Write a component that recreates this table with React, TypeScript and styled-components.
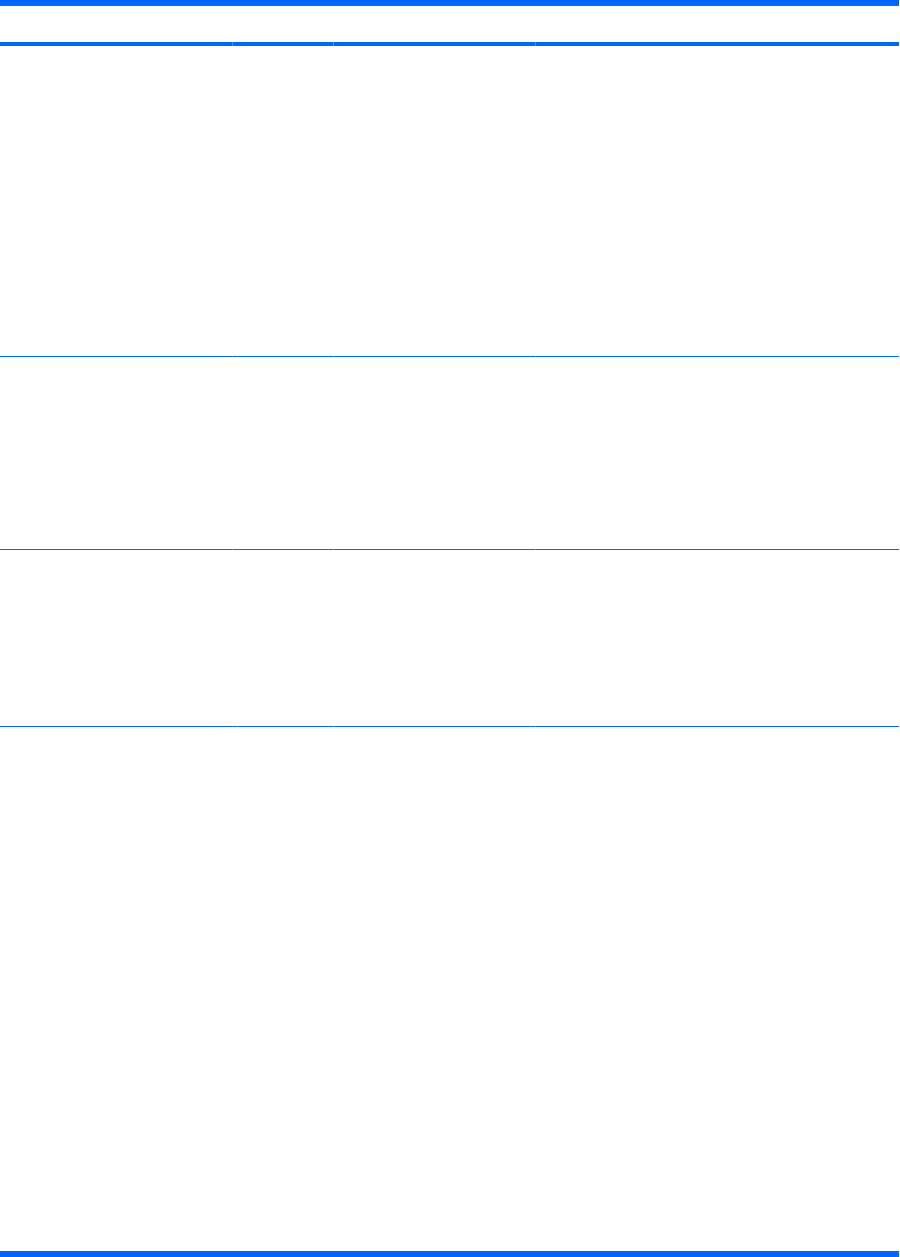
import React from "react";
import styled, { createGlobalStyle } from "styled-components";

const Global = createGlobalStyle`
  html, body { margin: 0; padding: 0; background: #ffffff; }
  body { font-family: "Liberation Sans", Arial, sans-serif; }
`;

const BLUE = "#0066ff";

const Table = styled.div`
  width: 899px;
  height: 1257px;
  display: grid;
  grid-template-columns: 232px 101px 202px 364px;
  grid-template-rows: 6px 36px 4px 310px 1px 192px 1px 176px 1px 524px 6px;
`;

const Bar = styled.div`
  grid-column: 1 / -1;
  background: ${BLUE};
`;

const Cell = styled.div`
  background: #ffffff;
`;

const Rule = styled.div<{ $first?: boolean }>`
  background: ${BLUE};
  box-shadow: ${(p) => (p.$first ? "none" : "inset 1px 0 0 #4d94ff")};
`;

const cols = [0, 1, 2, 3];

function RuleRow() {
  return (
    <>
      {cols.map((c) => (
        <Rule key={c} $first={c === 0} />
      ))}
    </>
  );
}

function CellRow() {
  return (
    <>
      {cols.map((c) => (
        <Cell key={c} />
      ))}
    </>
  );
}

export default function App() {
  return (
    <>
      <Global />
      <Table>
        <Bar />
        <CellRow />
        <RuleRow />
        <CellRow />
        <RuleRow />
        <CellRow />
        <RuleRow />
        <CellRow />
        <RuleRow />
        <CellRow />
        <Bar />
      </Table>
    </>
  );
}
